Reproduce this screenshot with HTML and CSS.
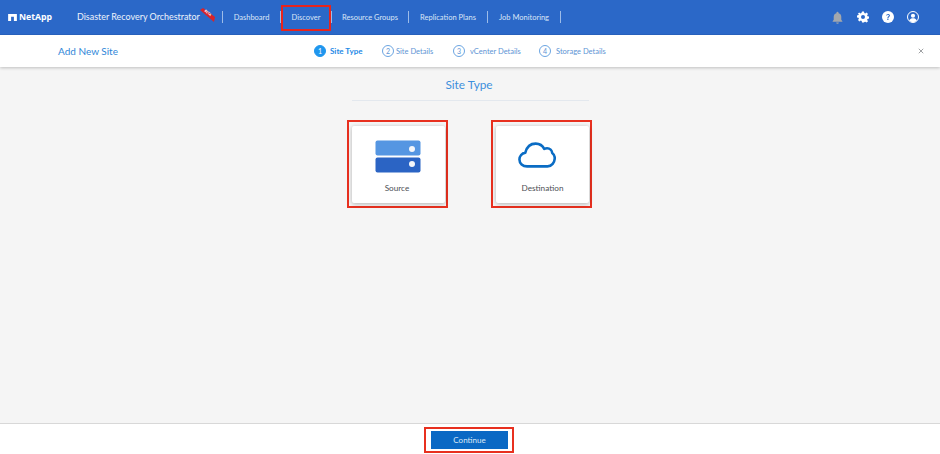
FILE: index.html
```html
<!DOCTYPE html>
<html lang="en">
<head>
<meta charset="utf-8">
<title>Disaster Recovery Orchestrator</title>
<link rel="stylesheet" href="styles.css">
</head>
<body>
<div class="app">
  <header class="topbar">
    <div class="logo">
      <svg class="logo-mark" viewBox="0 0 10 8" width="9" height="7"><path d="M0 0h10v8H6.600V3H3.400v5H0z" fill="#fff"/></svg>
      <span class="logo-text">NetApp</span>
    </div>
    <div class="product">Disaster Recovery Orchestrator
      <svg class="beta" viewBox="0 0 15 14" width="15" height="14"><path d="M0 2 3 0 15 9 14 14z" fill="#d8232a"/><text x="0" y="0" transform="translate(4.200 3) rotate(40)" class="beta-text">BETA</text></svg>
    </div>
    <nav class="nav">
      <a class="nav-item n-dash">Dashboard</a>
      <a class="nav-item n-disc">Discover</a>
      <a class="nav-item n-res">Resource Groups</a>
      <a class="nav-item n-rep">Replication Plans</a>
      <a class="nav-item n-job">Job Monitoring</a>
    </nav>
    <div class="tools">
      <svg viewBox="0 0 24 24" width="13" height="13"><path d="M12 1.500a2 2 0 0 0-2 2v.7A7 7 0 0 0 5 11v5l-2 3v1h18v-1l-2-3v-5a7 7 0 0 0-5-6.800V3.500a2 2 0 0 0-2-2zM9.500 21a2.500 2.500 0 0 0 5 0z" fill="#a3a7ad"/></svg>
      <svg viewBox="0 0 24 24" width="12" height="12"><path fill="#fff" fill-rule="evenodd" d="M10 1h4l.6 3.200 1.900.8 2.700-1.800 2.800 2.800-1.800 2.700.8 1.900 3 .6v4l-3 .6-.8 1.900 1.800 2.700-2.800 2.800-2.700-1.800-1.900.8L14 23h-4l-.6-3.200-1.900-.8-2.700 1.800-2.800-2.800 1.800-2.700-.8-1.900-3-.6v-4l3-.6.8-1.900L1.500 6l2.800-2.800L7 5l1.900-.8zM12 8a4 4 0 1 0 0 8 4 4 0 0 0 0-8z"/></svg>
      <svg viewBox="0 0 24 24" width="12" height="12"><circle cx="12" cy="12" r="12" fill="#fff"/><path d="M8.200 9.200A3.800 3.800 0 0 1 12 5.800c2.300 0 3.900 1.400 3.900 3.300 0 2.800-3.100 2.800-3.100 5.200h-2c0-3.300 3-3.300 3-5.100 0-.9-.8-1.500-1.800-1.500s-1.700.6-1.800 1.500zM10.600 15.700h2.300V18h-2.300z" fill="#2b68c8"/></svg>
      <svg viewBox="0 0 24 24" width="12" height="12"><circle cx="12" cy="12" r="11" fill="none" stroke="#fff" stroke-width="2"/><circle cx="12" cy="9.500" r="4.200" fill="#fff"/><path d="M4.500 19c1.500-3.400 4.200-4.500 7.500-4.500s6 1.100 7.500 4.500A10.500 10.500 0 0 1 12 22.500 10.500 10.500 0 0 1 4.500 19z" fill="#fff"/></svg>
    </div>
  </header>

  <div class="subbar">
    <div class="sub-title">Add New Site</div>
    <ol class="steps">
      <li class="step step-on s1"><span class="num">1</span>Site Type</li>
      <li class="step s2"><span class="num">2</span>Site Details</li>
      <li class="step s3"><span class="num">3</span>vCenter Details</li>
      <li class="step"><span class="num">4</span>Storage Details</li>
    </ol>
    <svg class="close" viewBox="0 0 8 8" width="6" height="6"><path d="M1 1l6 6M7 1L1 7" stroke="#8a8d91" stroke-width="1.100" fill="none"/></svg>
  </div>

  <main class="content">
    <h1 class="heading">Site Type</h1>
    <div class="cards">
      <div class="mark">
        <div class="card">
          <svg class="card-icon" viewBox="0 0 46 33" width="46" height="33">
            <rect x="0.500" y="0.500" width="45" height="15" rx="2" fill="#5596e2"/>
            <rect x="0.500" y="17.500" width="45" height="15" rx="2" fill="#2b64c4"/>
            <circle cx="37" cy="9" r="3" fill="#f4f6fa"/>
            <circle cx="37" cy="24" r="3" fill="#f4f6fa"/>
          </svg>
          <span class="card-label label-source">Source</span>
        </div>
      </div>
      <div class="mark">
        <div class="card">
          <svg class="card-icon cloud" viewBox="0 0 40 27" width="38" height="26"><path d="M9.500 25.500C5 25.500 1.500 22.500 1.500 18.300c0-3.700 2.600-6.600 6.200-7.300C9.300 4.800 13.500 1.500 18.600 1.500c4 0 7.300 2 9 5.600 1-.5 2-.7 3-.7 3 0 5.200 2.100 5.400 5 1.700 1.200 2.700 3 2.700 5.300 0 4.500-3.300 8.800-7.700 8.800z" fill="none" stroke="#0a6cc4" stroke-width="2.700" stroke-linejoin="round"/></svg>
          <span class="card-label">Destination</span>
        </div>
      </div>
    </div>
  </main>

  <footer class="footer">
    <div class="mark-btn"><button class="continue" type="button">Continue</button></div>
  </footer>
</div>
</body>
</html>
```
FILE: styles.css
```css
* { box-sizing: border-box; }
html, body { margin: 0; padding: 0; }
body { font-family: Lato, "Open Sans", sans-serif; background: #f5f5f5; }
.app { width: 940px; height: 454px; display: flex; flex-direction: column; overflow: hidden; }

.topbar { height: 35px; flex: none; background: #2b68c8; border-bottom: 1px solid #2760bb; display: flex; align-items: center; color: #fff; position: relative; z-index: 3; }
.logo { width: 77px; padding-left: 8px; display: flex; align-items: center; gap: 2px; }
.logo-mark { flex: none; }
.logo-text { font-family: "Open Sans", sans-serif; font-size: 8.700px; font-weight: 700; line-height: 10px; }
.product { width: 145px; font-size: 8.950px; color: #eef3fb; white-space: nowrap; position: relative; line-height: 34px; }
.beta { position: absolute; left: 123px; top: 8px; }
.beta-text { font-size: 3.200px; font-weight: 700; fill: #fff; font-family: "Open Sans", sans-serif; }

.nav { display: flex; align-items: center; height: 34px; }
.nav-item { font-size: 7.500px; color: #dbe6f7; white-space: nowrap; display: flex; align-items: center; justify-content: center; height: 12px; border-left: 1px solid #9dbce8; }
.n-dash { width: 58px; }
.n-disc { width: 51px; position: relative; }
.n-disc::after { content: ""; position: absolute; left: 0; top: -6px; width: 46px; height: 22px; border: 2px solid #e8241c; }
.n-res { width: 77px; }
.n-rep { width: 79px; }
.n-job { width: 74px; border-right: 1px solid #9dbce8; }

.tools { margin-left: auto; margin-right: 21px; display: flex; align-items: center; gap: 13px; }

.subbar { height: 32px; flex: none; background: #fff; box-shadow: 0 1px 3px rgba(0,0,0,.22); display: flex; align-items: center; position: relative; z-index: 2; }
.sub-title { width: 314px; padding-left: 58px; font-size: 10px; color: #2f86d8; }
.steps { list-style: none; margin: 0; padding: 0; display: flex; align-items: center; }
.step { display: flex; align-items: center; font-size: 7.500px; color: #5d94d4; white-space: nowrap; }
.step-on { color: #1f8ae6; font-size: 8px; font-weight: 700; }
.s1 { width: 68px; }
.s2 { width: 71px; }
.s3 { width: 86px; }
.num { width: 12px; height: 12px; border-radius: 50%; border: 1px solid #6ba5e2; color: #5d94d4; font-size: 7px; font-weight: 400; display: flex; align-items: center; justify-content: center; margin-right: 4px; flex: none; }
.s2 .num { margin-right: 2px; }
.s3 .num, .step:last-child .num { margin-right: 5px; }
.step-on .num { background: #1f96ee; border-color: #1f96ee; color: #fff; }
.close { margin-left: auto; margin-right: 16px; }

.content { flex: 1; background: #f5f5f5; display: flex; flex-direction: column; align-items: center; }
.heading { width: 237px; margin: 10px 0 0; padding-right: 2px; height: 24px; text-align: center; font-size: 11.800px; line-height: 16px; font-weight: 400; color: #3d8fdc; border-bottom: 1px solid #e3e8ee; }
.cards { display: flex; gap: 43px; margin: 19px 1px 0 0; }
.mark { width: 101px; height: 88px; border: 2px solid #e8301f; padding: 4px 3px 3px; }
.card { width: 93px; height: 77px; margin: 0 auto; background: #fff; border-radius: 2px; box-shadow: 0 1px 4px rgba(0,0,0,.28); display: flex; flex-direction: column; align-items: center; padding-top: 14px; }
.card-icon { flex: none; height: 33px; margin-right: 1px; }
.cloud { height: 26px; margin: 2px 11px 5px 0; }
.card-label { font-size: 8.200px; line-height: 10px; margin-top: 10px; color: #4d5055; }
.label-source { margin-right: 3px; }

.footer { height: 31px; flex: none; background: #fff; border-top: 1px solid #d8d8d8; display: flex; justify-content: center; align-items: flex-start; padding-top: 3px; }
.mark-btn { border: 2px solid #e8301f; width: 90px; height: 26px; padding: 2px 5px; margin-left: -2px; }
.continue { display: block; width: 77px; height: 18px; margin: 0 auto; padding: 0; border: 0; background: #0a68c4; color: #dce9f7; font: 400 8px Lato, sans-serif; }
```
